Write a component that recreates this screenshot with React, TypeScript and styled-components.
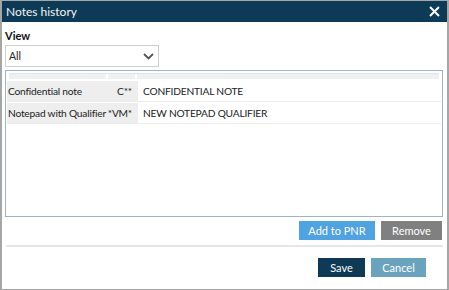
import React from "react";
import styled, { createGlobalStyle } from "styled-components";

const GlobalStyle = createGlobalStyle`
  html, body {
    margin: 0;
    padding: 0;
    background: #fff;
  }
  * {
    box-sizing: border-box;
  }
`;

const notes = [
  { label: "Confidential note", code: "C**", text: "CONFIDENTIAL NOTE" },
  { label: "Notepad with Qualifier", code: "*VM*", text: "NEW NOTEPAD QUALIFIER" },
];

const App = () => {
  return (
    <>
      <GlobalStyle />
      <Window>
        <TitleBar>
          <Title>Notes history</Title>
          <Close aria-label="close">
            <svg width="11" height="11" viewBox="0 0 11 11">
              <path d="M1 1 L10 10 M10 1 L1 10" stroke="#fff" strokeWidth="2" />
            </svg>
          </Close>
        </TitleBar>
        <Body>
          <Label>View</Label>
          <Select>
            <span>All</span>
            <svg width="11" height="7" viewBox="0 0 11 7">
              <path d="M1 1 L5.5 5.5 L10 1" stroke="#555" strokeWidth="1.8" fill="none" />
            </svg>
          </Select>
          <Table>
            <HeadRow>
              <HeadCell $w={97} />
              <HeadCell $w={27} />
              <HeadCell $w={0} />
            </HeadRow>
            {notes.map((n) => (
              <Row key={n.code}>
                <KeyCell>
                  <span>{n.label}</span>
                  <span>{n.code}</span>
                </KeyCell>
                <TextCell>{n.text}</TextCell>
              </Row>
            ))}
          </Table>
          <ActionBar>
            <Button $bg="#4fa3e0" $w={76}>Add to PNR</Button>
            <Button $bg="#808080" $w={61}>Remove</Button>
          </ActionBar>
          <Divider />
          <Footer>
            <Button $bg="#0e3a55" $w={47}>Save</Button>
            <Button $bg="#6aa3bd" $w={55}>Cancel</Button>
          </Footer>
        </Body>
      </Window>
    </>
  );
};

export default App;

const Window = styled.div`
  width: 449px;
  height: 290px;
  border: 1px solid #a6a6a6;
  border-left-width: 2px;
  border-right-width: 2px;
  display: flex;
  flex-direction: column;
  font-family: Lato, "Open Sans", sans-serif;
  color: #222;
  overflow: hidden;
`;
const TitleBar = styled.div`
  height: 21px;
  background: #0d3a56;
  display: flex;
  align-items: center;
  justify-content: space-between;
  padding: 0 7px 0 4px;
`;
const Title = styled.div`
  color: #f2f5f8;
  font-size: 12px;
`;
const Close = styled.div`
  display: flex;
  align-items: center;
`;
const Body = styled.div`
  flex: 1;
  padding: 7px 4px 0 3px;
  display: flex;
  flex-direction: column;
`;
const Label = styled.div`
  font-size: 11px;
  font-weight: 700;
  color: #111;
  height: 16px;
  line-height: 14px;
`;
const Select = styled.div`
  width: 154px;
  height: 22px;
  border: 1px solid #cfcfcf;
  display: flex;
  align-items: center;
  justify-content: space-between;
  padding: 0 4px 0 3px;
  font-size: 10.5px;
  color: #222;
`;
const Table = styled.div`
  margin-top: 3px;
  height: 147px;
  border: 1px solid #9fb3c4;
  padding: 2px 1px 0 1px;
  display: flex;
  flex-direction: column;
  gap: 1px;
`;
const HeadRow = styled.div`
  display: flex;
  gap: 2px;
  height: 6px;
  margin: 0 2px 1px 2px;
  border-top: 1px solid #dfe7ee;
`;
const HeadCell = styled.div<{ $w: number }>`
  background: #eef0f2;
  ${(p) => (p.$w ? `width: ${p.$w}px;` : "flex: 1;")}
`;
const Row = styled.div`
  display: flex;
  height: 21px;
  gap: 1px;
  font-size: 10.2px;
  letter-spacing: -0.2px;
  border-bottom: 1px solid #ececec;
`;
const KeyCell = styled.div`
  width: 131px;
  background: #eeeeee;
  display: flex;
  align-items: center;
  justify-content: space-between;
  padding: 0 6px 0 1px;
  white-space: nowrap;
`;
const TextCell = styled.div`
  flex: 1;
  display: flex;
  align-items: center;
  padding-left: 4px;
`;
const ActionBar = styled.div`
  display: flex;
  justify-content: flex-end;
  gap: 6px;
  margin-top: 4px;
  padding-right: 1px;
`;
const Button = styled.div<{ $bg: string; $w: number }>`
  background: ${(p) => p.$bg};
  color: #fff;
  font-size: 11px;
  height: 19px;
  width: ${(p) => p.$w}px;
  display: flex;
  align-items: center;
  justify-content: center;
`;
const Divider = styled.div`
  height: 2px;
  background: #e6e6e6;
  margin: 5px 0 0 1px;
`;
const Footer = styled.div`
  display: flex;
  justify-content: flex-end;
  gap: 6px;
  margin-top: 11px;
  padding-right: 17px;
`;
